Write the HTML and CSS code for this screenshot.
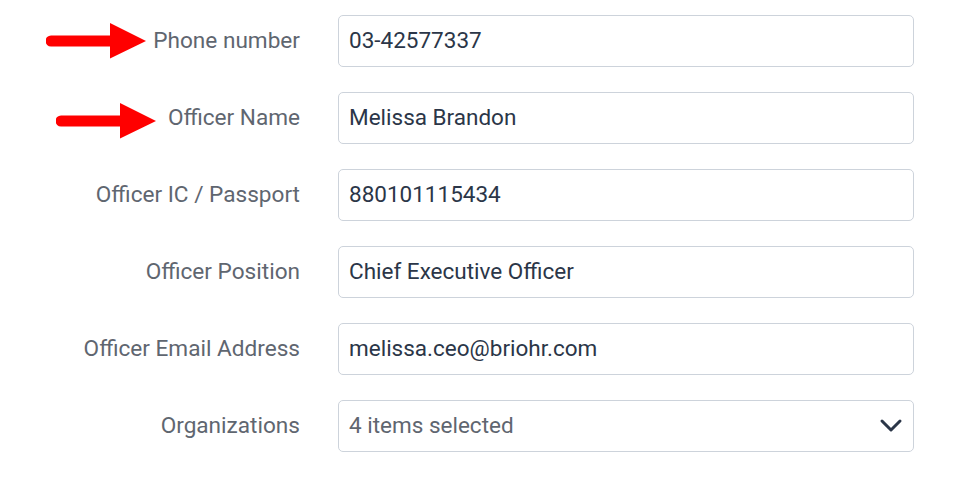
FILE: index.html
```html
<!DOCTYPE html>
<html>
<head>
<meta charset="utf-8">
<link rel="stylesheet" href="styles.css">
</head>
<body>
<form class="form">
  <div class="row">
    <label class="label">Phone number</label>
    <div class="field">03-42577337</div>
    <svg class="arrow arrow-1" width="110" height="40" viewBox="0 0 110 40"><path d="M5 12.5 H64 V0 L100 18 L64 35.5 V23.5 H5 A5.5 5.5 0 0 1 5 12.5 Z" fill="#ff0000"/></svg>
  </div>
  <div class="row">
    <label class="label">Officer Name</label>
    <div class="field">Melissa Brandon</div>
    <svg class="arrow arrow-2" width="110" height="40" viewBox="0 0 110 40"><path d="M5 12.5 H64 V0 L100 18 L64 35.5 V23.5 H5 A5.5 5.5 0 0 1 5 12.5 Z" fill="#ff0000"/></svg>
  </div>
  <div class="row">
    <label class="label">Officer IC / Passport</label>
    <div class="field">880101115434</div>
  </div>
  <div class="row">
    <label class="label">Officer Position</label>
    <div class="field">Chief Executive Officer</div>
  </div>
  <div class="row">
    <label class="label">Officer Email Address</label>
    <div class="field">melissa.ceo@briohr.com</div>
  </div>
  <div class="row">
    <label class="label">Organizations</label>
    <div class="field select">
      <span class="placeholder">4 items selected</span>
      <svg class="chevron" width="24" height="16" viewBox="0 0 24 16"><path d="M3 3 L12 12 L21 3" fill="none" stroke="#2b3648" stroke-width="3" stroke-linecap="round" stroke-linejoin="round"/></svg>
    </div>
  </div>
</form>
</body>
</html>
```
FILE: styles.css
```css
html, body {
  margin: 0;
  padding: 0;
  background: #ffffff;
}
body {
  font-family: Roboto, "Liberation Sans", sans-serif;
}
.form {
  display: flex;
  flex-direction: column;
  gap: 25px;
  padding: 15px 40px 0 0;
  width: 914px;
}
.row {
  position: relative;
  display: grid;
  grid-template-columns: 300px 1fr;
  column-gap: 38px;
  align-items: center;
}
.label {
  text-align: right;
  font-size: 22.6px;
  color: #5f6670;
  white-space: nowrap;
  padding-bottom: 2px;
}
.field {
  box-sizing: border-box;
  height: 52px;
  border: 1px solid #cdd3db;
  border-radius: 5px;
  padding: 0 10px 2px;
  display: flex;
  align-items: center;
  font-size: 22.5px;
  color: #2b3648;
}
.select {
  justify-content: space-between;
  padding-right: 10px;
  padding-bottom: 0;
}
.placeholder {
  color: #5f6670;
  padding-bottom: 2px;
}
.chevron {
  display: block;
}
.arrow {
  position: absolute;
}
.arrow-1 {
  left: 46px;
  top: 8px;
}
.arrow-2 {
  left: 56px;
  top: 11px;
}
```
